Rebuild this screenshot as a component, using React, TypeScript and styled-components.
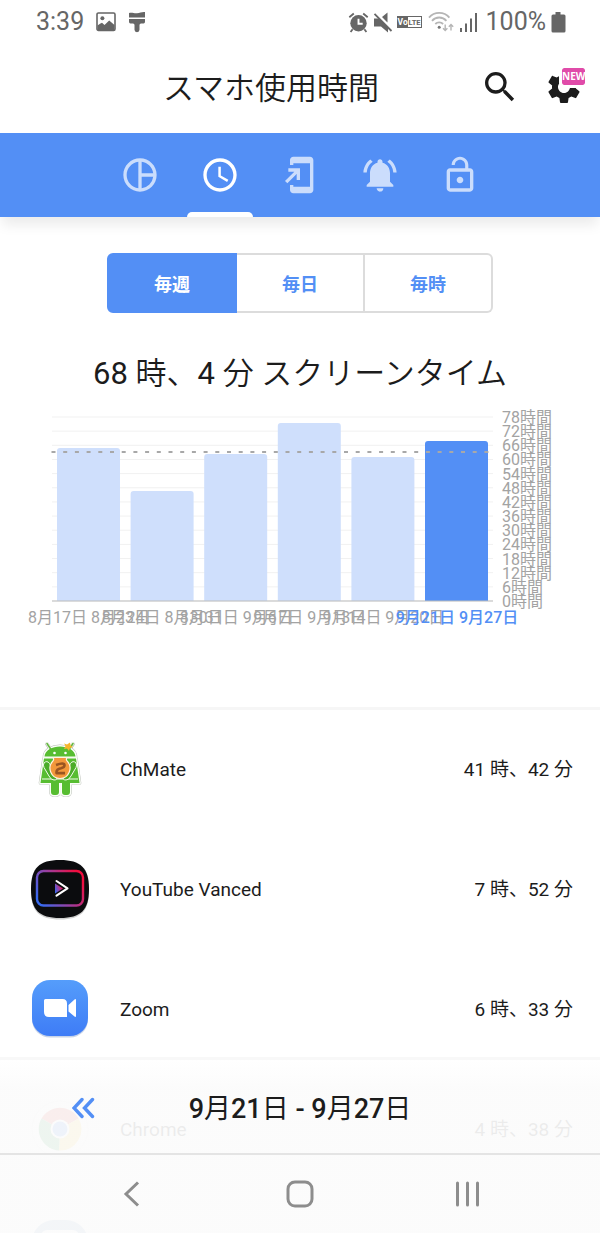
import React, { useState } from "react";
import styled, { createGlobalStyle, css } from "styled-components";
import {
  MdAccessTime,
  MdAddToHomeScreen,
  MdLockOpen,
  MdNotificationsActive,
  MdPieChartOutline,
  MdSearch,
  MdSettings,
} from "react-icons/md";

const BLUE = "#538ff5";
const PALE = "#cfdffc";
const INK = "#1c1c1c";
const FONT = `Roboto, "Noto Sans CJK JP", sans-serif`;

const GlobalStyle = createGlobalStyle`
  *, *::before, *::after { box-sizing: border-box; }
  body { margin: 0; background: #fff; color: ${INK}; font-family: ${FONT}; }
  button { font: inherit; color: inherit; border: 0; padding: 0; background: none; cursor: pointer; }
  svg { display: block; }
`;

const Screen = styled.div`
  position: relative;
  display: flex;
  flex-direction: column;
  height: 100vh;
  overflow: hidden;
`;

const StatusBar = styled.div`
  display: flex;
  flex: none;
  justify-content: space-between;
  align-items: center;
  height: 42px;
  padding: 2px 34px 0 36px;
  color: #666;
  font-size: 25px;
  line-height: 30px;
`;

const StatusGroup = styled.div<{ $gap: number }>`
  display: flex;
  align-items: center;
  gap: ${(p) => p.$gap}px;
`;

const AppBar = styled.header`
  display: flex;
  flex: none;
  align-items: center;
  height: 91px;
  padding: 0 16px 2px 62px;
`;

const Title = styled.h1`
  flex: 1;
  margin: 0;
  padding-top: 4px;
  text-align: center;
  font-size: 31px;
  line-height: 40px;
  font-weight: 350;
`;

const Actions = styled.div`
  display: flex;
  gap: 24px;
`;

const IconButton = styled.button`
  position: relative;
  width: 40px;
  height: 40px;
`;

const NewBadge = styled.span`
  position: absolute;
  top: -2px;
  right: -4px;
  width: 29px;
  border: 3px solid #fff;
  border-radius: 5px;
  background: #e04ba9;
  background-clip: padding-box;
  color: #fff;
  text-align: center;
  font: 700 10px/17px "Open Sans", sans-serif;
`;

const TabBar = styled.nav`
  position: relative;
  z-index: 1;
  display: flex;
  flex: none;
  justify-content: center;
  height: 84px;
  background: ${BLUE};
  box-shadow: 0 10px 12px -2px rgba(0, 0, 0, 0.08);
`;

const Tab = styled.button<{ $active: boolean }>`
  position: relative;
  display: flex;
  align-items: center;
  justify-content: center;
  width: 80px;
  color: ${(p) => (p.$active ? "#fff" : "#cbddfc")};
  ${(p) =>
    p.$active &&
    css`
      &::after {
        content: "";
        position: absolute;
        bottom: 0;
        left: 7px;
        right: 7px;
        height: 5px;
        border-radius: 5px 5px 0 0;
        background: #fff;
      }
    `}
`;

const Content = styled.main`
  flex: 1;
  min-height: 0;
  overflow-y: auto;
  scrollbar-width: none;
`;

const Segments = styled.div`
  display: flex;
  margin: 36px 107px 0;
`;

const Segment = styled.button<{ $active: boolean }>`
  flex: 1;
  height: 60px;
  border: 2px solid ${(p) => (p.$active ? BLUE : "#dcdcdc")};
  background: ${(p) => (p.$active ? BLUE : "#fff")};
  color: ${(p) => (p.$active ? "#fff" : BLUE)};
  font-size: 18px;
  font-weight: 700;
  &:not(:first-child) { border-left-width: 0; }
  &:first-child { border-radius: 6px 0 0 6px; }
  &:last-child { border-radius: 0 6px 6px 0; }
`;

const Total = styled.h2`
  margin: 39px 0 0;
  text-align: center;
  font-size: 31px;
  line-height: 44px;
  font-weight: 400;
`;

const Soft = styled.span`
  font-weight: 350;
`;

const Chart = styled.svg`
  width: 100%;
  height: auto;
  font-family: ${FONT};
  font-size: 16px;
`;

const AppList = styled.ul`
  margin: 0;
  padding: 0;
  list-style: none;
  border-top: 3px solid #f6f6f6;
`;

const AppRow = styled.li`
  display: flex;
  align-items: center;
  gap: 30px;
  height: 120px;
  padding: 0 27px 0 30px;
  font-size: 19px;
  line-height: 24px;
`;

const AppName = styled.span`
  flex: 1;
`;

const BottomOverlay = styled.div`
  position: absolute;
  left: 0;
  right: 0;
  bottom: 0;
  border-top: 3px solid #f8f8f8;
  background: linear-gradient(rgba(255, 255, 255, 0.8), rgba(251, 251, 251, 0.93) 30px);
`;

const DateBar = styled.div`
  display: grid;
  grid-template-columns: 96px 1fr 96px;
  align-items: center;
  height: 95px;
  padding-top: 3px;
  border-bottom: 2px solid #e4e4e4;
`;

const PreviousButton = styled.button`
  display: flex;
  justify-content: flex-end;
  color: ${BLUE};
`;

const DateRange = styled.div`
  padding-top: 2px;
  text-align: center;
  font-size: 27px;
  line-height: 36px;
  font-weight: 500;
`;

const DateUnit = styled.span`
  font-weight: 400;
`;

const SystemNav = styled.nav`
  display: flex;
  justify-content: center;
  height: 78px;
  color: #8d8d8d;
`;

const NavButton = styled.button`
  display: flex;
  align-items: center;
  justify-content: center;
  width: 168px;
`;

const ImageIcon = () => (
  <svg width="20" height="20" viewBox="0 0 20 20" fill="currentColor">
    <rect x="1" y="1" width="18" height="17.4" rx="1.4" fill="none" stroke="currentColor" strokeWidth="1.6" />
    <circle cx="6.4" cy="6.2" r="2" />
    <path d="M1.5 13.500 4 11.800 6 10.800l2.500 2.200L13.200 8.500l5.300 4.500V18h-17z" />
  </svg>
);

const BrushIcon = () => (
  <svg width="18" height="22" viewBox="0 0 18 22" fill="currentColor">
    <path d="M1 2c3-1 5 .6 8 .3S14 .6 17 1v5.600H1zM1 8h16v2.800q0 1.600-1.400 1.600h-2.600q-1.500 0-1.500 1.500v4.800a2.500 2.500 0 0 1-5 0v-4.800q0-1.500-1.500-1.500H2.400Q1 12.400 1 10.800z" />
  </svg>
);

const AlarmIcon = () => (
  <svg width="21" height="21" viewBox="0 0 21 21" fill="currentColor">
    <circle cx="10.5" cy="11.3" r="8.2" />
    <path d="M1.3 5.2 5.8 1.5M19.7 5.2l-4.500-3.700M4.600 17.300 2.600 20M16.400 17.300l2 2.700" stroke="currentColor" strokeWidth="1.8" />
    <path d="M10.5 6.7v5h4.2" fill="none" stroke="#fff" strokeWidth="1.9" />
  </svg>
);

const MuteIcon = () => (
  <svg width="20" height="21" viewBox="0 0 20 21" fill="currentColor">
    <path d="M1 6.500h5L15 15v5.500L8 14.500H1zM9 5 14.500.5v10z" />
    <path d="M1.500 1.800 18.500 19" stroke="currentColor" strokeWidth="1.8" />
  </svg>
);

const VolteIcon = () => (
  <svg width="25" height="12" viewBox="0 0 25 12">
    <rect x="0.5" y="0.5" width="24" height="11" fill="#fff" stroke="#666" />
    <rect width="11" height="12" fill="#666" />
    <text x="0.6" y="9.200" fontFamily="Roboto" fontSize="8.500" fontWeight="700" fill="#fff">Vo</text>
    <text x="11.500" y="9.200" fontFamily="Roboto" fontSize="7.500" fontWeight="700" fill="#666">LTE</text>
  </svg>
);

const WifiIcon = () => (
  <svg width="26" height="22" viewBox="0 0 26 22" fill="none" stroke="#b5b5b5" strokeWidth="1.8">
    <path d="M1 6.600a13.500 13.500 0 0 1 20.400 0M4 9.800a9.500 9.500 0 0 1 14.400 0M7.300 13a5.500 5.500 0 0 1 7.800 0" />
    <circle cx="11.200" cy="16.300" r="1.500" fill="#777" stroke="none" />
    <path d="M17.200 13.500v6M15 17.300l2.200 2.200 2.200-2.200M23 19.500v-6M20.800 15.700l2.200-2.200 2.200 2.200" strokeWidth="1.400" />
  </svg>
);

const SignalIcon = () => (
  <svg width="20" height="20" viewBox="0 0 20 20" fill="currentColor">
    <path d="M0 16h2v4H0zM5 11.500h2V20H5zM10 6.500h2V20h-2zM15 1h2v19h-2z" />
  </svg>
);

const BatteryIcon = () => (
  <svg width="15" height="21" viewBox="0 0 15 21" fill="currentColor">
    <path d="M4.500 0h5v2.500H13q1.500 0 1.500 1.500v15q0 1.500-1.500 1.500H2Q.5 20.500.5 19V4Q.5 2.500 2 2.500h2.500z" />
  </svg>
);

const CHMATE_BODY =
  "M14.500 16.500c1-13.500 30-13.500 31 0zM14 18.500h32L49.500 43h-39zM21 43h8v9q0 3-3 3h-2q-3 0-3-3zM32 43h8v9q0 3-3 3h-2q-3 0-3-3z";

const ChMateIcon = () => (
  <svg width="60" height="60" viewBox="0 0 60 60">
    <g strokeLinejoin="round" strokeLinecap="round">
      <path d={`m17 4 4 6M43 4l-4 6${CHMATE_BODY}`} stroke="#b5b9b2" strokeWidth="3.600" fill="#b5b9b2" />
      <path d={`m17 3.500 4 6M43 3.500l-4 6${CHMATE_BODY}`} stroke="#fbfff8" strokeWidth="2.800" fill="#fbfff8" />
      <path d="m17 3.500 4 6M43 3.500l-4 6" stroke="#63b53f" strokeWidth="1.600" />
    </g>
    <path d={CHMATE_BODY} fill="#57bd31" />
    <path d="M12 39h36M14 17.500h32M30.500 43v13" stroke="#f4fbee" strokeWidth="1.200" />
    <path d="M14 23q3-3 5.500.5L27 36q1 4-3 4-3 0-5-4l-5-8.500q-1.200-2.500 0-4.500zM46 23q-3-3-5.500.5L33 36q-1 4 3 4 3 0 5-4l5-8.500q1.200-2.500 0-4.500z" fill="#4aac28" stroke="#f4fbee" strokeWidth="1" />
    <path d="M23 17.500h14q-1.500 2 .5 4c5.500 6 1.500 17-7.500 17s-13-11-7.500-17q2-2 .5-4z" fill="#f3983b" stroke="#fff4e3" strokeWidth="1.200" />
    <path d="M26 25q8.500-3 8.500.3 0 2.200-3.500 3-4.500.9-4.500 3.800v1h8.500" fill="none" stroke="#9a5522" strokeWidth="2.600" strokeLinejoin="round" />
    <circle cx="24.500" cy="13" r="1.300" fill="#fff" />
    <circle cx="35.500" cy="13" r="1.300" fill="#fff" />
    <path d="m34 3.500 3 1 3-2 .5 3 2.500 1.500-3 1-1 3-2-2.500-3 .5 1.500-3z" fill="#f6b52b" />
  </svg>
);

const VancedIcon = () => (
  <svg width="60" height="60" viewBox="0 0 60 60">
    <defs>
      <linearGradient id="vancedFrame" x1="0" y1="0.8" x2="1" y2="0.3">
        <stop offset="0" stopColor="#376af0" />
        <stop offset="0.5" stopColor="#9c3e9e" />
        <stop offset="1" stopColor="#f20d3e" />
      </linearGradient>
    </defs>
    <path d="M30 1.500C51 1.500 59 9.500 59 30.500S51 59.500 30 59.500 1 51.500 1 30.500 9 1.500 30 1.500z" fill="#cfcfcf" />
    <path d="M30 0C51 0 59 8 59 29S51 58 30 58 1 50 1 29 9 0 30 0z" fill="#0b0c0e" />
    <rect x="7" y="11" width="46" height="34.500" rx="6.500" fill="none" stroke="url(#vancedFrame)" strokeWidth="2.400" />
    <path d="m25 23.500 8 5-8 5z" fill="url(#vancedFrame)" />
    <path d="m26.500 21 11 7.300-11 7.300" fill="none" stroke="#fff" strokeWidth="2.100" strokeLinecap="round" strokeLinejoin="round" />
  </svg>
);

const ZoomIcon = () => (
  <svg width="60" height="60" viewBox="0 0 60 60">
    <defs>
      <linearGradient id="zoomFill" x1="0" y1="0" x2="0" y2="1">
        <stop offset="0" stopColor="#559dfb" />
        <stop offset="1" stopColor="#3e7cf6" />
      </linearGradient>
    </defs>
    <rect x="2" y="1.500" width="56" height="56" rx="18" fill="#c7d3e8" />
    <rect x="2" y="0" width="56" height="56" rx="18" fill="url(#zoomFill)" />
    <path d="M15.500 19h17q4.500 0 4.500 4.500V37H19q-5 0-5-5V20.500q0-1.500 1.500-1.500zM38.500 25l6-5.500q1.500-1 1.500.5v16q0 1.500-1.500.5l-6-5z" fill="#fff" />
  </svg>
);

const ChromeIcon = () => (
  <svg width="60" height="60" viewBox="0 0 60 60">
    <circle cx="30" cy="29" r="28" fill="#fff" stroke="#eee" />
    <path d="M30 29 11.500 18.500A21.500 21.500 0 0 1 48.600 18.500z" fill="#e0443a" />
    <path d="M30 29 48.600 18.500A21.500 21.500 0 0 1 29 50.500z" fill="#f8cf45" />
    <path d="M30 29 29 50.500A21.500 21.500 0 0 1 11.500 18.500z" fill="#39a257" />
    <circle cx="30" cy="29" r="9.500" fill="#fff" />
    <circle cx="30" cy="29" r="7.500" fill="#4a88ee" />
  </svg>
);

const MessagesIcon = () => (
  <svg width="60" height="60" viewBox="0 0 60 60">
    <rect x="2" y="0" width="56" height="57" rx="22" fill="#8faed0" />
    <rect x="11" y="10" width="38" height="30" rx="6" fill="#fff" />
  </svg>
);

const weeks = [
  { label: "8月17日 8月23日", top: 448 },
  { label: "8月24日 8月30日", top: 491 },
  { label: "8月31日 9月6日", top: 454 },
  { label: "9月7日 9月13日", top: 423 },
  { label: "9月14日 9月20日", top: 457 },
  { label: "9月21日 9月27日", top: 441 },
];

const CHART_TOP = 396;
const BASELINE = 601 - CHART_TOP;
const STEP = 184 / 13;

const WeeklyChart = () => (
  <Chart viewBox="0 0 600 311" role="img" aria-label="スクリーンタイム">
    {Array.from({ length: 14 }, (_, i) => {
      const y = BASELINE - i * STEP;
      return (
        <g key={i}>
          <path d={`M52 ${y}H493`} stroke="#f1f1f1" />
          <text x="502" y={y + 6} fill="#a3a3a3">{`${i * 6}時間`}</text>
        </g>
      );
    })}
    {weeks.map((week, i) => {
      const current = i === weeks.length - 1;
      const x = 57 + i * 73.6;
      const y = week.top - CHART_TOP;
      return (
        <g key={week.label}>
          <path
            d={`M${x} ${BASELINE}V${y + 3}q0-3 3-3h57q3 0 3 3V${BASELINE}z`}
            fill={current ? BLUE : PALE}
          />
          <text
            x={x + 32}
            y="227"
            textAnchor="middle"
            fill={current ? BLUE : "#a3a3a3"}
            fontWeight={current ? 500 : 400}
          >
            {week.label}
          </text>
        </g>
      );
    })}
    <path d={`M52 ${BASELINE}H493`} stroke="#bdbdbd" />
    <path d="M51.500 56H489" stroke="#a8a8a8" strokeWidth="1.800" strokeDasharray="4 7.700" />
  </Chart>
);

const tabs = [
  { label: "概要", Icon: MdPieChartOutline },
  { label: "使用時間", Icon: MdAccessTime },
  { label: "起動回数", Icon: MdAddToHomeScreen },
  { label: "通知", Icon: MdNotificationsActive },
  { label: "ロック解除", Icon: MdLockOpen },
];

const apps = [
  { name: "ChMate", time: "41 時、42 分", Icon: ChMateIcon },
  { name: "YouTube Vanced", time: "7 時、52 分", Icon: VancedIcon },
  { name: "Zoom", time: "6 時、33 分", Icon: ZoomIcon },
  { name: "Chrome", time: "4 時、38 分", Icon: ChromeIcon },
  { name: "", time: "", Icon: MessagesIcon },
];

export default function App() {
  const [tab, setTab] = useState(1);
  const [period, setPeriod] = useState(0);

  return (
    <>
      <GlobalStyle />
      <Screen>
        <StatusBar>
          <StatusGroup $gap={12}>
            <span>3:39</span>
            <ImageIcon />
            <BrushIcon />
          </StatusGroup>
          <StatusGroup $gap={6}>
            <StatusGroup $gap={4}>
              <AlarmIcon />
              <MuteIcon />
              <VolteIcon />
            </StatusGroup>
            <WifiIcon />
            <SignalIcon />
            <StatusGroup $gap={5}>
              <span>100%</span>
              <BatteryIcon />
            </StatusGroup>
          </StatusGroup>
        </StatusBar>
        <AppBar>
          <Title>スマホ使用時間</Title>
          <Actions>
            <IconButton aria-label="検索">
              <MdSearch size={40} />
            </IconButton>
            <IconButton aria-label="設定">
              <MdSettings size={40} />
              <NewBadge>NEW</NewBadge>
            </IconButton>
          </Actions>
        </AppBar>
        <TabBar>
          {tabs.map(({ label, Icon }, i) => (
            <Tab key={label} aria-label={label} $active={i === tab} onClick={() => setTab(i)}>
              <Icon size={40} />
            </Tab>
          ))}
        </TabBar>
        <Content>
          <Segments>
            {["毎週", "毎日", "毎時"].map((label, i) => (
              <Segment key={label} $active={i === period} onClick={() => setPeriod(i)}>
                {label}
              </Segment>
            ))}
          </Segments>
          <Total>
            68 <Soft>時、</Soft>4 <Soft>分 スクリーンタイム</Soft>
          </Total>
          <WeeklyChart />
          <AppList>
            {apps.map(({ name, time, Icon }) => (
              <AppRow key={name}>
                <Icon />
                <AppName>{name}</AppName>
                <span>{time}</span>
              </AppRow>
            ))}
          </AppList>
        </Content>
        <BottomOverlay>
          <DateBar>
            <PreviousButton aria-label="前の週">
              <svg width="24" height="22" viewBox="0 0 24 22" fill="none" stroke="currentColor" strokeWidth="3.400" strokeLinecap="round">
                <path d="M10 2.500 2 11l8 8.500M20.500 2.500l-8 8.500 8 8.500" />
              </svg>
            </PreviousButton>
            <DateRange>
              9<DateUnit>月</DateUnit>21<DateUnit>日</DateUnit> - 9<DateUnit>月</DateUnit>27<DateUnit>日</DateUnit>
            </DateRange>
          </DateBar>
          <SystemNav>
            <NavButton aria-label="戻る">
              <svg width="18" height="26" viewBox="0 0 18 26" fill="none" stroke="currentColor" strokeWidth="3">
                <path d="M15 1.500 3 13l12 11.500" />
              </svg>
            </NavButton>
            <NavButton aria-label="ホーム">
              <svg width="28" height="28" viewBox="0 0 28 28" fill="none" stroke="currentColor" strokeWidth="3">
                <rect x="2" y="2" width="24" height="24" rx="7" />
              </svg>
            </NavButton>
            <NavButton aria-label="履歴">
              <svg width="26" height="26" viewBox="0 0 26 26" stroke="currentColor" strokeWidth="3" strokeLinecap="round">
                <path d="M2.500 2v22M12.500 2v22M22.500 2v22" />
              </svg>
            </NavButton>
          </SystemNav>
        </BottomOverlay>
      </Screen>
    </>
  );
}
